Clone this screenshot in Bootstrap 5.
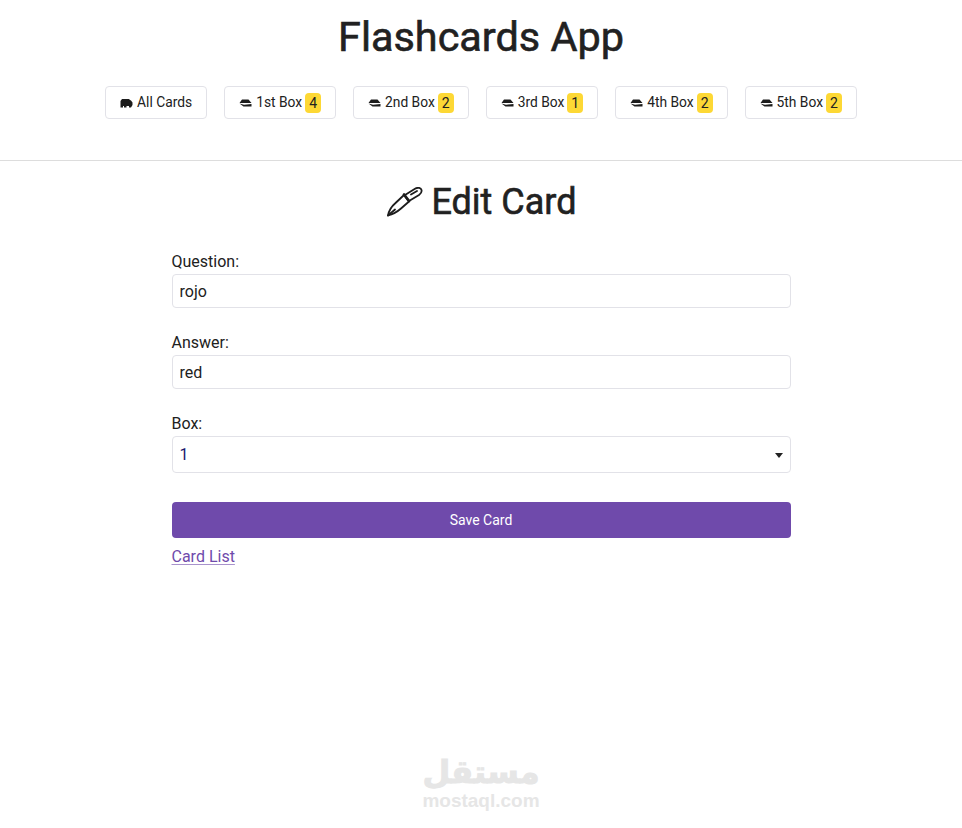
<!DOCTYPE html>
<html lang="en">

<head>
    <meta charset="UTF-8" />
    <meta name="viewport" content="width=device-width, initial-scale=1" />
    <title>Flashcards App</title>
    <link href="https://cdn.jsdelivr.net/npm/bootstrap@5.3.0/dist/css/bootstrap.min.css" rel="stylesheet" />
    <style>
        body { font-family: Roboto, "Liberation Sans", sans-serif; color: #212121; height: 828px; overflow: hidden; }
        .app-title { font-size: 41.4px; font-weight: 400; line-height: 52px; margin: 11px 0 23px; -webkit-text-stroke: .6px #212121; }
        .box-nav { gap: 17px; height: 33px; margin-bottom: 41px; }
        .box-btn { display: flex; align-items: center; gap: 4px; height: 33px; padding: 0 14px; font-size: 13.8px; color: #212121; background: #fff; border: 1px solid #e2e2e8; border-radius: 4px; text-decoration: none; }
        .count-tag { background: #fdd835; border-radius: 4px; padding: 0 4px; margin-left: -1px; font-size: 14px; line-height: 20px; }
        .rule-line { margin: 0; border-color: #ddd; opacity: 1; }
        .edit-title { font-size: 36px; font-weight: 400; line-height: 42px; margin: 20px 0 29px; -webkit-text-stroke: .6px #212121; }
        .edit-title svg { vertical-align: -3px; margin-left: 2px; margin-right: -1px; }
        .edit-form { width: 619px; }
        .field-label { display: block; font-size: 16px; line-height: 19px; margin-bottom: 3px; }
        .field-input { display: block; width: 100%; height: 34px; padding: 0 7px; font-size: 16px; color: #212121; border: 1px solid #e2e2e8; border-radius: 4px; outline: 0; }
        .field-wrap { margin-bottom: 25px; }
        .field-select { position: relative; height: 37px; }
        .field-select select { height: 37px; color: #1a1a6e; background: #fff; appearance: none; }
        .field-select::after { content: ""; position: absolute; right: 8px; top: 17px; border: 4.5px solid transparent; border-top: 5px solid #222; border-bottom: 0; }
        .save-btn { height: 36px; margin-top: 29px; font-size: 14px; font-weight: 400; color: #fff; background: #6f4aab; border: 0; border-radius: 4px; }
        .save-btn:hover { background: #6f4aab; color: #fff; }
        .list-link { display: inline-block; margin-top: 9px; font-size: 16px; line-height: 20px; color: #6f4aab; text-decoration-color: #a893cc; text-underline-offset: 2px; }
        .site-mark { position: absolute; left: 0; right: 0; top: 753px; color: #e6e6e6; font-weight: 700; line-height: 1; }
        .mark-ar { font-family: "DejaVu Sans", sans-serif; font-size: 32px; line-height: 38px; -webkit-text-stroke: 1px #e6e6e6; }
        .mark-en { font-family: "Liberation Sans", sans-serif; font-size: 19px; line-height: 20px; }
    </style>
</head>

<body>
    <svg width="0" height="0" class="d-block">
        <symbol id="ico-box" viewBox="0 0 13 10"><path d="M3 1.500h6.500L12.500 5H.5zM.5 5.500l4 3h8V6L5 6.800z" fill="#1c1c1c"/></symbol>
        <symbol id="ico-all" viewBox="0 0 13 10"><path d="M.5 9.500V3l1.500-2h7l1 1 1 .5 1.500 2v2.500L11 9.500H9V8H6.500v1.500H4V8H3v1.500z" fill="#1c1c1c"/></symbol>
    </svg>
    <header class="text-center">
        <h1 class="app-title">Flashcards App</h1>
        <nav class="box-nav d-flex justify-content-center">
            <a class="box-btn" href="#"><svg width="13" height="10"><use href="#ico-all"/></svg>All Cards</a>
            <a class="box-btn" href="#"><svg width="13" height="10"><use href="#ico-box"/></svg>1st Box <span class="count-tag">4</span></a>
            <a class="box-btn" href="#"><svg width="13" height="10"><use href="#ico-box"/></svg>2nd Box <span class="count-tag">2</span></a>
            <a class="box-btn" href="#"><svg width="13" height="10"><use href="#ico-box"/></svg>3rd Box <span class="count-tag">1</span></a>
            <a class="box-btn" href="#"><svg width="13" height="10"><use href="#ico-box"/></svg>4th Box <span class="count-tag">2</span></a>
            <a class="box-btn" href="#"><svg width="13" height="10"><use href="#ico-box"/></svg>5th Box <span class="count-tag">2</span></a>
        </nav>
        <hr class="rule-line" />
    </header>

    <main>
        <h2 class="edit-title text-center">
            <svg width="36" height="30" viewBox="0 0 36 30" fill="none" stroke="#1c1c1c" stroke-width="1.8" stroke-linejoin="round" stroke-linecap="round">
                <path d="M1 28.500C2 23 4.500 19.500 8 16.500L17 8l5 6.500-8 7C10 25 5 27.500 1 28.500z" />
                <path d="M18 8L28 1.800C31 0 34 1 34.500 3c.5 2-.5 3.500-2.500 5l-10 6" />
                <path d="M17 7.500l5 6.500" stroke-width="2.800" />
                <path d="M24 7.500l6-3.500M1 28.500l7-6" />
            </svg>
            Edit Card
        </h2>
        <form class="edit-form mx-auto">
            <div class="field-wrap">
                <label class="field-label" for="q">Question:</label>
                <input class="field-input" id="q" type="text" value="rojo" />
            </div>
            <div class="field-wrap">
                <label class="field-label" for="a">Answer:</label>
                <input class="field-input" id="a" type="text" value="red" />
            </div>
            <div>
                <label class="field-label" for="b">Box:</label>
                <div class="field-select">
                    <select class="field-input" id="b">
                        <option>1</option>
                        <option>2</option>
                        <option>3</option>
                        <option>4</option>
                        <option>5</option>
                    </select>
                </div>
            </div>
            <button type="button" class="btn save-btn w-100 d-block">Save Card</button>
            <a class="list-link" href="#">Card List</a>
        </form>
    </main>

    <div class="site-mark text-center">
        <div class="mark-ar">مستقل</div>
        <div class="mark-en">mostaql.com</div>
    </div>
</body>

</html>
